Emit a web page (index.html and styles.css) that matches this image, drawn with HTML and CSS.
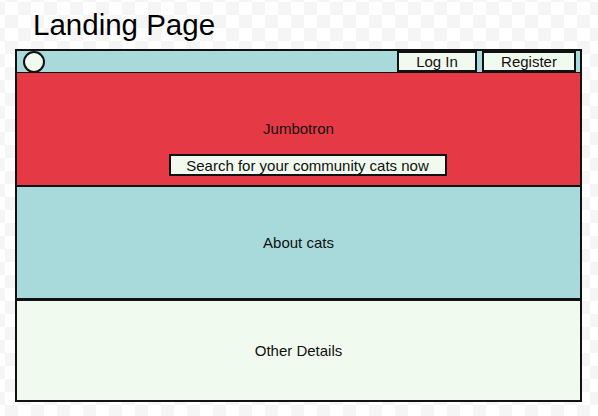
FILE: index.html
```html
<html>
    <head>
        <title>Landing Page</title>
        <meta name="viewport" content="width=device-width, initial-scale=1.0">
        <link rel="stylesheet" href="styles.css">
    </head>
    <body>
        <h1 class="page-title">Landing Page</h1>

        <div class="frame">
            <!-- nav bar -->
            <div class="nav">
                <div class="logo"></div>
                <div class="nav-buttons">
                    <div class="btn btn-login">Log In</div>
                    <div class="btn btn-register">Register</div>
                </div>
            </div>

            <!-- jumbotron -->
            <div class="jumbotron">
                <p class="section-text">Jumbotron</p>
                <div class="btn btn-search">Search for your community cats now</div>
            </div>

            <div class="about">
                <p class="section-text">About cats</p>
            </div>

            <div class="details">
                <p class="section-text">Other Details</p>
            </div>
        </div>
    </body>
</html>
```
FILE: styles.css
```css
body{
    margin: 0;
    padding: 9px 0 0 0;
    font-family: "Liberation Sans", Arial, sans-serif;
    color: #111;
    background-color: #fff;
    background-image: repeating-conic-gradient(#f5f5f5 0 25%, #fff 0 50%);
    background-size: 26px 26px;
    background-position: 5px 2px;
    height: 416px;
    box-sizing: border-box;
}

.page-title{
    margin: 0 0 8px 33px;
    font-size: 29.5px;
    line-height: 32px;
    font-weight: normal;
    color: #000;
}

.frame{
    margin-left: 15px;
    width: 563px;
    border: 2px solid #111;
}

.nav{
    height: 21px;
    background-color: #a8dadc;
    border-bottom: 1px solid #111;
    display: flex;
    align-items: stretch;
    justify-content: space-between;
    padding-right: 4px;
}

.logo{
    width: 18px;
    height: 18px;
    margin-left: 6px;
    border: 2px solid #111;
    border-radius: 50%;
    background-color: #f1faee;
    align-self: center;
    margin-top: 1px;
}

.nav-buttons{
    display: flex;
    gap: 5px;
}

.btn{
    background-color: #f1faee;
    border: 2px solid #111;
    box-sizing: border-box;
    font-size: 15px;
    display: flex;
    align-items: center;
    justify-content: center;
}

.btn-login{
    width: 80px;
}

.btn-register{
    width: 94px;
}

.section-text{
    margin: 0;
    font-size: 15px;
}

.jumbotron{
    height: 112px;
    background-color: #e63946;
    display: flex;
    flex-direction: column;
    align-items: center;
    padding-top: 47px;
    box-sizing: border-box;
}

.btn-search{
    width: 278px;
    height: 22px;
    margin-top: 17px;
    margin-left: 18px;
}

.about{
    height: 111px;
    background-color: #a8dadc;
    border-top: 2px solid #111;
    display: flex;
    align-items: center;
    justify-content: center;
}

.details{
    height: 99px;
    background-color: #f1faee;
    border-top: 3px solid #111;
    display: flex;
    align-items: center;
    justify-content: center;
}
```
